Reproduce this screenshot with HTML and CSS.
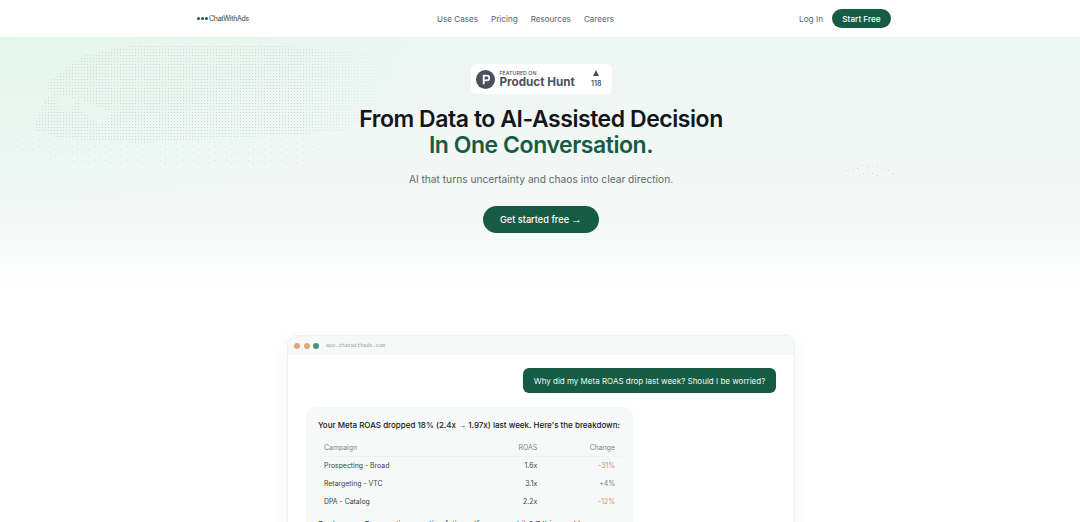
FILE: index.html
```html
<!DOCTYPE html>
<html lang="en">
<head>
  <meta charset="UTF-8" />
  <meta name="viewport" content="width=device-width, initial-scale=1.0"/>
  <title>ChatWithAds</title>
  <link rel="stylesheet" href="styles.css">
</head>
<body>

  <header class="nav">
    <div class="nav-inner">
      <a class="logo" href="#">
        <span class="logo-dots"><i></i><i></i><i></i></span>
        <span>ChatWithAds</span>
      </a>
      <nav class="nav-links">
        <a href="#">Use Cases</a>
        <a href="#">Pricing</a>
        <a href="#">Resources</a>
        <a href="#">Careers</a>
      </nav>
      <div class="nav-actions">
        <a class="login" href="#">Log In</a>
        <a class="btn-small" href="#">Start Free</a>
      </div>
    </div>
  </header>

  <section class="hero">
    <!-- dotted world map behind the hero -->
    <svg class="hero-dots" width="1080" height="253" viewBox="0 0 1080 253" aria-hidden="true">
      <defs>
        <pattern id="dense" width="3" height="3" patternUnits="userSpaceOnUse">
          <rect width="1" height="1" fill="#cddad6"/>
        </pattern>
        <pattern id="sparse" width="11" height="7" patternUnits="userSpaceOnUse">
          <rect width="1" height="1" fill="#d9e3e0"/>
          <rect x="6" y="4" width="1" height="1" fill="#d9e3e0"/>
        </pattern>
        <pattern id="faint" width="2" height="2" patternUnits="userSpaceOnUse">
          <rect width="1" height="1" fill="#e4ece9"/>
        </pattern>
        <linearGradient id="fadeX" gradientUnits="userSpaceOnUse" x1="300" x2="400" y1="0" y2="0">
          <stop offset="0" stop-color="#fff"/>
          <stop offset="1" stop-color="#000"/>
        </linearGradient>
        <linearGradient id="fadeY" gradientUnits="userSpaceOnUse" x1="0" x2="0" y1="120" y2="250">
          <stop offset="0" stop-color="#000"/>
          <stop offset="0.6" stop-color="#666"/>
          <stop offset="1" stop-color="#000"/>
        </linearGradient>
        <mask id="fadeRight"><rect width="1080" height="253" fill="url(#fadeX)"/></mask>
        <mask id="fadeBand"><rect width="1080" height="253" fill="url(#fadeY)"/></mask>
      </defs>
      <rect mask="url(#fadeBand)" fill="url(#faint)" width="1080" height="253"/>
      <g mask="url(#fadeRight)">
        <path fill="url(#dense)" fill-rule="evenodd" d="M45 47 60 36 83 19 127 9 183 7 277 8 317 12 372 18 405 28 420 50 380 80 340 95 140 106 60 101 33 93 45 62 52 57ZM57 61 66 58 76 64 66 76 58 70ZM80 62 113 76 100 88 80 72Z"/>
        <path fill="url(#sparse)" d="M5 97 140 106 340 100 350 118 300 128 100 130 5 112Z"/>
      </g>
      <g fill="#ccd8d4">
        <rect x="846" y="133" width="1" height="1"/><rect x="853" y="132" width="1" height="1"/>
        <rect x="857" y="131" width="1" height="1"/><rect x="862" y="128" width="1" height="1"/>
        <rect x="868" y="129" width="1" height="1"/><rect x="877" y="129" width="1" height="1"/>
        <rect x="882" y="132" width="1" height="1"/><rect x="888" y="133" width="1" height="1"/>
        <rect x="893" y="136" width="1" height="1"/><rect x="859" y="137" width="1" height="1"/>
        <rect x="863" y="136" width="1" height="1"/><rect x="868" y="136" width="1" height="1"/>
        <rect x="872" y="136" width="1" height="1"/><rect x="877" y="138" width="1" height="1"/>
      </g>
    </svg>

    <div class="hero-content">
      <a class="ph-badge" href="#">
        <svg class="ph-icon" width="19" height="19" viewBox="0 0 18 18" aria-hidden="true">
          <circle cx="9" cy="9" r="9" fill="#4b4f5e"/>
          <path fill="#fff" d="M6.4 4.4h3.9a3.1 3.1 0 0 1 0 6.2H8.2v3H6.4ZM8.2 6.1v2.8h2.1a1.4 1.4 0 0 0 0-2.8Z"/>
        </svg>
        <span class="ph-text">
          <small>FEATURED ON</small>
          <strong>Product Hunt</strong>
        </span>
        <span class="ph-votes">
          <i></i>
          <b>118</b>
        </span>
      </a>
      <h1>From Data to AI-Assisted Decision<br><span>In One Conversation.</span></h1>
      <p class="subtitle">AI that turns uncertainty and chaos into clear direction.</p>
      <a class="btn-main" href="#">Get started free <span class="arrow">→</span></a>
    </div>
  </section>

  <section class="demo">
    <div class="window">
      <div class="window-bar">
        <i class="dot orange"></i><i class="dot orange"></i><i class="dot teal"></i>
        <span class="url">app.chatwithads.com</span>
      </div>
      <div class="chat">
        <div class="msg-user">Why did my Meta ROAS drop last week? Should I be worried?</div>
        <div class="msg-ai">
          <p class="msg-title">Your Meta ROAS dropped 18% (2.4x <span class="arrow">→</span> 1.97x) last week. Here's the breakdown:</p>
          <table>
            <thead>
              <tr><th>Campaign</th><th>ROAS</th><th>Change</th></tr>
            </thead>
            <tbody>
              <tr><td>Prospecting - Broad</td><td>1.6x</td><td class="down">-31%</td></tr>
              <tr><td>Retargeting - VTC</td><td>3.1x</td><td class="up">+4%</td></tr>
              <tr><td>DPA - Catalog</td><td>2.2x</td><td class="down">-12%</td></tr>
            </tbody>
          </table>
          <p class="msg-note">Root cause: Prospecting creative fatigue (frequency hit 3.7 this week).</p>
        </div>
      </div>
    </div>
  </section>

</body>
</html>
```

FILE: styles.css
```css
* {
  margin: 0;
  padding: 0;
  box-sizing: border-box;
}

html {
  overflow: hidden;
}

body {
  font-family: 'Inter', 'Liberation Sans', sans-serif;
  background: #fff;
  color: #14171a;
}

a {
  text-decoration: none;
  color: inherit;
}

.arrow {
  font-family: 'Liberation Sans', sans-serif;
}

.nav {
  height: 37px;
  background: #fff;
  display: flex;
  justify-content: center;
  padding-left: 8px;
}

.nav-inner {
  width: 694px;
  display: flex;
  justify-content: space-between;
  align-items: center;
}

.logo {
  display: flex;
  align-items: center;
  gap: 1px;
  font-size: 7px;
  letter-spacing: -0.3px;
  color: #2c4a40;
}

.logo-dots {
  display: flex;
  gap: 1px;
}

.logo-dots i {
  width: 3px;
  height: 3px;
  border-radius: 50%;
  background: #165c45;
}

.nav-links {
  display: flex;
  gap: 13px;
  margin-left: 3px;
  font-size: 8.1px;
  color: #5a6462;
}

.nav-actions {
  display: flex;
  align-items: center;
  gap: 9px;
  font-size: 8.2px;
}

.login {
  color: #5a6462;
}

.btn-small {
  height: 19px;
  width: 59px;
  display: flex;
  align-items: center;
  justify-content: center;
  border-radius: 10px;
  background: #165c45;
  color: #fff;
  font-weight: 500;
}

.hero {
  position: relative;
  height: 253px;
  background: radial-gradient(ellipse 420px 190px at 0% 0%, #e4f7ee, transparent 100%),
              linear-gradient(180deg, #ecf6f2 0%, #f1f7f5 45%, #f7faf9 75%, #fff 100%);
}

.hero-dots {
  position: absolute;
  left: 0;
  top: 0;
}

.hero-content {
  position: relative;
  padding: 27px 0 0 2px;
  display: flex;
  flex-direction: column;
  align-items: center;
}

.ph-badge {
  width: 141px;
  height: 30px;
  display: flex;
  align-items: center;
  padding: 0 10px 0 5px;
  background: #fff;
  border-radius: 5px;
  color: #4b4f5e;
}

.ph-icon {
  flex: none;
}

.ph-text {
  display: flex;
  flex-direction: column;
  margin-left: 5px;
  flex: 1;
}

.ph-text small {
  font-size: 5.3px;
  font-weight: 500;
  line-height: 6px;
}

.ph-text strong {
  font-size: 11.7px;
  font-weight: 700;
  line-height: 13px;
}

.ph-votes {
  display: flex;
  flex-direction: column;
  align-items: center;
  gap: 4px;
}

.ph-votes i {
  width: 0;
  height: 0;
  border-left: 3.5px solid transparent;
  border-right: 3.5px solid transparent;
  border-bottom: 6px solid #4b4f5e;
}

.ph-votes b {
  font-size: 7px;
  font-weight: 600;
  line-height: 8px;
}

h1 {
  margin-top: 12px;
  font-size: 23px;
  line-height: 26.4px;
  font-weight: 600;
  text-align: center;
  letter-spacing: -0.45px;
  color: #12151a;
}

h1 span {
  color: #165c45;
}

.subtitle {
  margin-top: 14px;
  font-size: 10.2px;
  line-height: 13px;
  color: #5f6968;
}

.btn-main {
  margin-top: 20px;
  width: 116px;
  height: 27px;
  display: flex;
  align-items: center;
  justify-content: center;
  gap: 2px;
  border-radius: 14px;
  background: #165c45;
  color: #fff;
  font-size: 9.2px;
  font-weight: 500;
}

.btn-main .arrow {
  font-size: 11px;
}

.demo {
  display: flex;
  justify-content: center;
  padding: 45px 0 0 2px;
}

.window {
  width: 508px;
  background: #fff;
  border: 1px solid #eef1f0;
  border-radius: 10px;
  box-shadow: 0 4px 16px rgba(20, 60, 50, 0.05);
  overflow: hidden;
}

.window-bar {
  height: 19px;
  background: #f7f9f8;
  display: flex;
  align-items: center;
  gap: 3.5px;
  padding-left: 6px;
}

.dot {
  width: 6px;
  height: 6px;
  border-radius: 50%;
}

.dot.orange {
  background: #dfa77f;
}

.dot.teal {
  background: #4f8f80;
}

.url {
  margin-left: 3.5px;
  font-family: 'Liberation Mono', monospace;
  font-size: 5.2px;
  color: #97a3a0;
}

.chat {
  padding: 13px 18px 0;
  display: flex;
  flex-direction: column;
}

.msg-user {
  align-self: flex-end;
  height: 25px;
  width: 253px;
  display: flex;
  align-items: center;
  justify-content: center;
  border-radius: 6px;
  background: #165c45;
  color: #f2f7f5;
  font-size: 8px;
}

.msg-ai {
  margin-top: 14px;
  width: 327px;
  padding: 13px 12px 12px;
  background: #f7f9f9;
  border-radius: 8px;
}

.msg-title {
  font-size: 8px;
  font-weight: 500;
  line-height: 11px;
  white-space: nowrap;
  color: #14171a;
}

table {
  width: 100%;
  margin-top: 6px;
  border-collapse: collapse;
  font-size: 6.9px;
}

th {
  font-weight: 400;
  color: #7c8886;
  height: 19px;
  text-align: right;
  padding: 2px 6px 0;
  border-bottom: 1px solid #eef2f0;
}

td {
  height: 18px;
  text-align: right;
  padding: 0 6px;
  color: #39423f;
}

th:first-child,
td:first-child {
  text-align: left;
}

td.down {
  color: #d08f63;
}

td.up {
  color: #4f8f80;
}

.msg-note {
  margin-top: 9px;
  font-size: 8px;
  color: #39423f;
}
```
